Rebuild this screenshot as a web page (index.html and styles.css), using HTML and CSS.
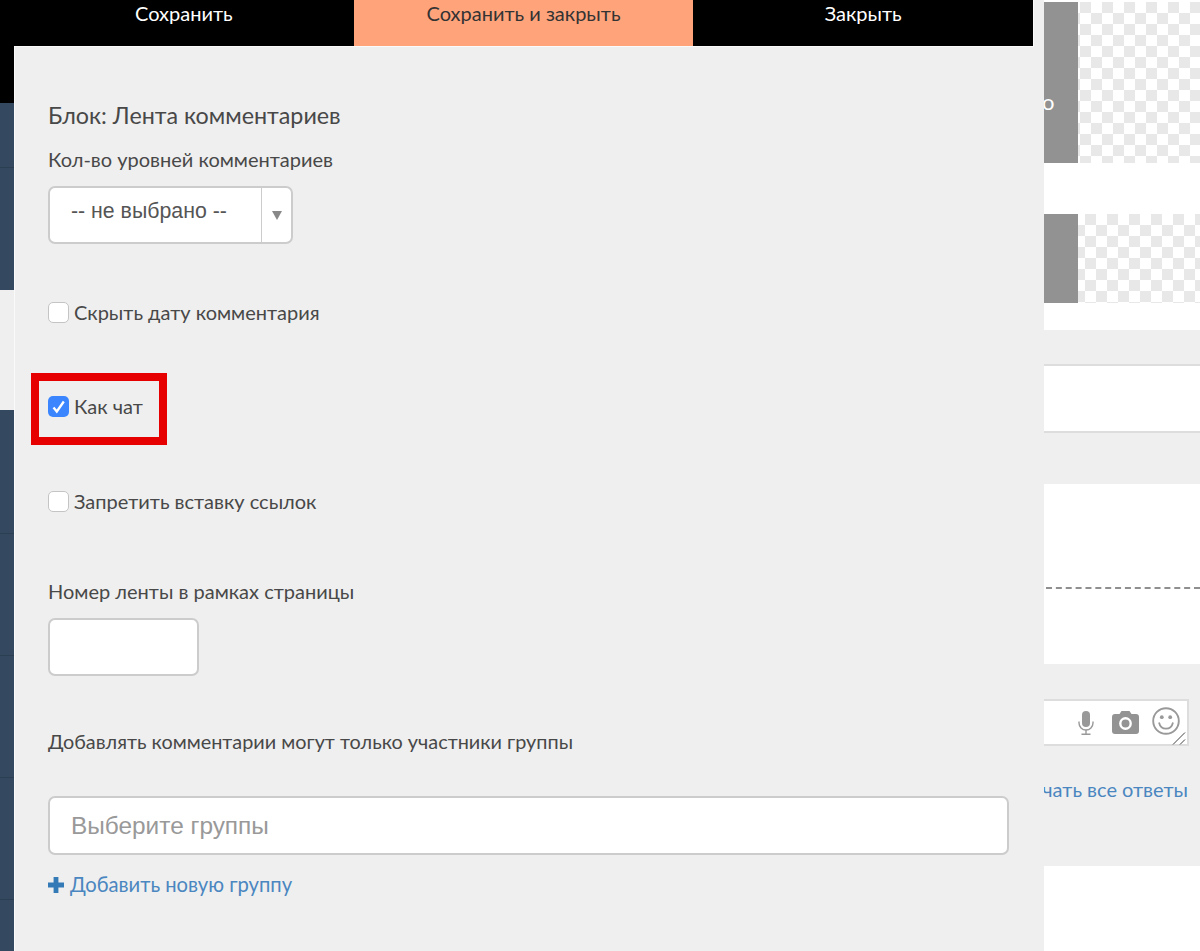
FILE: index.html
```html
<!DOCTYPE html>
<html lang="ru">
<head>
<meta charset="utf-8">
<title>Блок: Лента комментариев</title>
<link rel="stylesheet" href="styles.css">
</head>
<body>
<div class="page">
  <aside class="strip">
    <div class="strip-black"></div>
    <div class="strip-blue strip-short"><div class="strip-cell cell-64"></div><div class="strip-cell"></div></div>
    <div class="strip-gap"></div>
    <div class="strip-blue strip-long">
      <div class="strip-cell cell-123"></div>
      <div class="strip-cell cell-122"></div>
      <div class="strip-cell cell-122"></div>
      <div class="strip-cell cell-121"></div>
      <div class="strip-cell"></div>
    </div>
  </aside>

  <main class="editor">
    <nav class="toolbar">
      <a class="tool">Сохранить</a>
      <a class="tool tool-active">Сохранить и закрыть</a>
      <a class="tool">Закрыть</a>
    </nav>
    <section class="panel">
      <h1 class="title">Блок: Лента комментариев</h1>
      <div class="label label-levels">Кол-во уровней комментариев</div>
      <div class="select">
        <span class="select-value">-- не выбрано --</span>
        <span class="select-arrow"><span class="triangle"></span></span>
      </div>

      <label class="check check-first"><span class="box"></span><span class="check-text">Скрыть дату комментария</span></label>
      <label class="check check-chat">
        <span class="box box-on">
          <svg class="tick" viewBox="0 0 21 21"><path d="M5.500 11.500l3.300 4L15.800 5.500" fill="none" stroke="#fff" stroke-width="2.300"/></svg>
        </span><span class="check-text">Как чат</span>
        <span class="highlight"></span>
      </label>
      <label class="check check-third"><span class="box"></span><span class="check-text">Запретить вставку ссылок</span></label>

      <div class="label label-number">Номер ленты в рамках страницы</div>
      <input class="field field-small" type="text">

      <div class="label label-group">Добавлять комментарии могут только участники группы</div>
      <input class="field field-wide" type="text" placeholder="Выберите группы">

      <a class="add-link">
        <svg class="plus" viewBox="0 0 16 16"><path d="M5.600 0h4.800v5.600H16v4.800h-5.600V16H5.600v-5.600H0V5.600h5.600z" fill="#337ab7"/></svg>
        <span class="add-text">Добавить новую группу</span>
      </a>
    </section>
  </main>

  <aside class="side">
    <div class="white-block">
      <div class="thumb thumb-tall">
        <div class="thumb-gray"><span class="thumb-letter">о</span></div>
        <div class="checker checker-a"></div>
      </div>
      <div class="thumb thumb-short">
        <div class="thumb-gray"></div>
        <div class="checker checker-b"></div>
      </div>
    </div>
    <div class="white-row"></div>
    <div class="white-dashed"><div class="dash"></div></div>
    <div class="composer">
      <svg class="ic-mic" viewBox="0 0 16 24">
        <rect x="4" y="0" width="8" height="16" rx="4" fill="#999"/>
        <path d="M1 10.500v1.500a7 7 0 0 0 14 0v-1.500" fill="none" stroke="#999" stroke-width="1.400"/>
        <path d="M8 19v4M3.500 23.200h9" fill="none" stroke="#999" stroke-width="1.400"/>
      </svg>
      <svg class="ic-cam" viewBox="0 0 27 23">
        <path d="M3 3h4.500L9.500 0h8l2 3H24a3 3 0 0 1 3 3v14a3 3 0 0 1-3 3H3a3 3 0 0 1-3-3V6a3 3 0 0 1 3-3z" fill="#939393"/>
        <circle cx="13.500" cy="12.500" r="5.200" fill="none" stroke="#fff" stroke-width="2.400"/>
      </svg>
      <svg class="ic-smile" viewBox="0 0 28 28">
        <circle cx="14" cy="14" r="12.800" fill="none" stroke="#999" stroke-width="1.900"/>
        <circle cx="9.800" cy="10.200" r="1.900" fill="#999"/>
        <circle cx="18.200" cy="10.200" r="1.900" fill="#999"/>
        <path d="M7 15.500c1 4.200 3.800 6.200 7 6.200s6-2 7-6.200" fill="none" stroke="#999" stroke-width="1.800"/>
      </svg>
      <svg class="ic-resize" viewBox="0 0 14 14">
        <path d="M1 13.500L13 1.500M8 13.500l5-5" fill="none" stroke="#444" stroke-width="1"/>
      </svg>
    </div>
    <div class="answers"><a class="answers-link">Получать все ответы</a></div>
    <div class="white-tail"></div>
  </aside>
</div>
</body>
</html>
```

FILE: styles.css
```css
* { box-sizing: border-box; }
html, body { margin: 0; height: 100%; }
body {
  height: 951px;
  overflow: hidden;
  background: #efefef;
  font-family: Lato, "Open Sans", sans-serif;
  color: #484848;
}
.page { display: flex; height: 951px; overflow: hidden; }

/* left strip */
.strip { flex: 0 0 14px; display: flex; flex-direction: column; height: 951px; }
.strip-black { height: 103px; background: #000; }
.strip-blue { background: #34495f; display: flex; flex-direction: column; }
.strip-short { height: 187px; }
.strip-gap { height: 120px; background: #efefef; }
.strip-long { height: 541px; }
.strip-cell { border-bottom: 1px solid #2b3e52; }
.strip-cell:last-child { border-bottom: 0; }
.cell-64 { height: 65px; }
.cell-123 { height: 124px; }
.cell-122 { height: 122px; }
.cell-121 { height: 122px; }

/* centre column */
.editor { flex: 0 0 1020px; display: flex; flex-direction: column; }
.toolbar { display: flex; height: 46px; background: #000; border-right: 1px solid #fafafa; }
.tool {
  flex: 1 1 0;
  color: #fff;
  font-size: 20px;
  line-height: 26px;
  text-align: center;
}
.tool-active { background: #ffa37b; color: #333; }
.panel {
  flex: 1;
  background: #efefef;
  border-top: 1px solid #fafafa;
  border-left: 1px solid #fafafa;
  padding: 54px 0 0 33px;
}
.title { margin: 0; font-weight: 400; font-size: 23.3px; line-height: 28px; color: #484848; }
.label { font-size: 20px; line-height: 24px; color: #484848; }
.label-levels { margin-top: 18px; }
.select {
  display: flex;
  width: 245px;
  height: 58px;
  margin-top: 15px;
  background: #fff;
  border: 2px solid #ccc;
  border-radius: 7px;
}
.select-value {
  flex: 1;
  padding-left: 21px;
  font-family: "Liberation Sans", Arial, sans-serif;
  font-size: 21.3px;
  line-height: 46px;
  color: #555;
  border-right: 1.5px solid #ccc;
}
.select-arrow { flex: 0 0 29px; display: flex; align-items: center; justify-content: center; }
.triangle {
  width: 0;
  height: 0;
  border-left: 5px solid transparent;
  border-right: 5px solid transparent;
  border-top: 9px solid #888;
}
.check {
  position: relative;
  display: flex;
  align-items: center;
  gap: 5px;
  height: 21px;
  font-size: 20px;
  color: #484848;
}
.check-text { margin-top: -2px; }
.check-first { margin-top: 58px; }
.check-chat { margin-top: 73px; }
.check-third { margin-top: 74px; }
.box {
  flex: 0 0 21px;
  width: 21px;
  height: 21px;
  background: #fff;
  border: 1.5px solid #c4c4c4;
  border-radius: 5px;
}
.box-on { background: #3b86ff; border: 0; display: block; }
.tick { display: block; width: 21px; height: 21px; }
.highlight {
  position: absolute;
  left: -17px;
  top: -23px;
  width: 136px;
  height: 72px;
  border: 8px solid #e60000;
}
.label-number { margin-top: 67px; }
.label-group { margin-top: 53px; font-size: 19.85px; }
.field {
  display: block;
  background: #fff;
  border: 2px solid #ccc;
  border-radius: 7px;
  font-family: "Liberation Sans", Arial, sans-serif;
  font-size: 24.4px;
  color: #555;
  outline: 0;
}
.field::placeholder { color: #999; opacity: 1; }
.field-small { width: 151px; height: 58px; margin-top: 15px; }
.field-wide { width: 961px; height: 59px; margin-top: 43px; padding: 0 21px; }
.add-link {
  display: flex;
  align-items: center;
  gap: 6px;
  margin-top: 19px;
  font-size: 20.2px;
  line-height: 24px;
  color: #4a86c0;
}
.add-text { margin-top: -2px; }
.plus { width: 16px; height: 16px; flex: none; }

/* right column */
.side { flex: 1; min-width: 0; display: flex; flex-direction: column; padding-left: 10px; background: #efefef; }
.white-block { height: 330px; background: #fff; padding-top: 2px; }
.thumb { display: flex; }
.thumb-tall { height: 161px; }
.thumb-short { height: 89px; margin-top: 51px; }
.thumb-gray {
  flex: 0 0 34px;
  background: #929292;
  display: flex;
  align-items: center;
  overflow: hidden;
}
.thumb-letter { color: #fff; font-size: 22px; line-height: 21px; margin-left: -2px; margin-top: 38px; }
.checker {
  flex: 1;
  background-color: #fff;
  background-image: conic-gradient(#e8e8e8 25%, #fff 0 50%, #e8e8e8 0 75%, #fff 0);
  background-size: 22px 22px;
}
.checker-a { background-position: -9px 0; }
.checker-b { background-position: -4px 0; }
.white-row {
  height: 69px;
  margin-top: 34px;
  background: #fff;
  border-top: 2px solid #ddd;
  border-bottom: 2px solid #ddd;
}
.white-dashed { height: 180px; margin-top: 51px; background: #fff; padding-top: 103px; padding-left: 2px; }
.dash { border-top: 2px dashed #8f8f8f; }
.composer {
  position: relative;
  display: flex;
  align-items: center;
  height: 47px;
  margin-top: 35px;
  margin-right: 11px;
  padding-left: 34px;
  background: #fff;
  border: 2px solid #ddd;
  border-left: 0;
}
.ic-mic { width: 16px; height: 24px; flex: none; }
.ic-cam { width: 27px; height: 23px; flex: none; margin-left: 18px; }
.ic-smile { width: 28px; height: 28px; flex: none; margin-left: 13px; margin-top: -3px; }
.ic-resize { position: absolute; right: 1px; bottom: -1px; width: 14px; height: 14px; }
.answers {
  display: flex;
  justify-content: flex-end;
  overflow: hidden;
  margin-top: 31px;
  margin-right: 12px;
  white-space: nowrap;
}
.answers-link { font-size: 20px; line-height: 24px; color: #4a86c0; flex: none; }
.white-tail { flex: 1; margin-top: 65px; background: #fff; }
```
